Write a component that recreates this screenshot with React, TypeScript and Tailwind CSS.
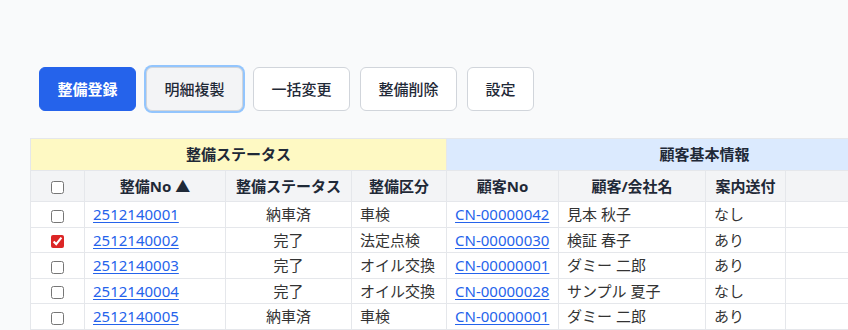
import React from "react";

type Row = {
  no: string;
  status: string;
  kind: string;
  customerNo: string;
  name: string;
  notice: string;
  checked?: boolean;
};

const rows: Row[] = [
  { no: "2512140001", status: "納車済", kind: "車検", customerNo: "CN-00000042", name: "見本 秋子", notice: "なし" },
  { no: "2512140002", status: "完了", kind: "法定点検", customerNo: "CN-00000030", name: "検証 春子", notice: "あり", checked: true },
  { no: "2512140003", status: "完了", kind: "オイル交換", customerNo: "CN-00000001", name: "ダミー 二郎", notice: "あり" },
  { no: "2512140004", status: "完了", kind: "オイル交換", customerNo: "CN-00000028", name: "サンプル 夏子", notice: "なし" },
  { no: "2512140005", status: "納車済", kind: "車検", customerNo: "CN-00000001", name: "ダミー 二郎", notice: "あり" },
];

const font = { fontFamily: '"Noto Sans", "Noto Sans CJK JP", sans-serif' };

function Btn({ label, variant = "default" }: { label: string; variant?: "primary" | "default" | "focused" }) {
  const base = "h-[44px] rounded-md border px-[17.5px] text-[15px] leading-none";
  if (variant === "primary")
    return <button className={`${base} border-[#2563eb] bg-[#2563eb] font-bold text-white`}>{label}</button>;
  if (variant === "focused")
    return (
      <button className={`${base} border-[#d1d5db] bg-[#f3f4f6] font-medium text-[#1f2937] ring-2 ring-[#93c5fd]`}>
        {label}
      </button>
    );
  return <button className={`${base} border-[#d1d5db] bg-white font-medium text-[#1f2937]`}>{label}</button>;
}

export default function App() {
  const th = "border border-[#e5e7eb] px-2 font-bold text-[#1f2937]";
  const td = "border border-[#e5e7eb] px-2 text-[#333333]";
  const link = "text-[#2563eb] underline underline-offset-2";

  return (
    <div className="h-screen overflow-hidden bg-[#f9fafb] pt-[67px]" style={font}>
      <div className="flex gap-[10px] pl-[39px]">
        <Btn label="整備登録" variant="primary" />
        <Btn label="明細複製" variant="focused" />
        <Btn label="一括変更" />
        <Btn label="整備削除" />
        <Btn label="設定" />
      </div>

      {/* 表は右へはみ出す — 顧客基本情報の続きは画面外 */}
      <div className="mt-[27px] overflow-hidden pl-[30px]">
        <table className="w-[932px] table-fixed border-collapse bg-white text-[15px]">
          <colgroup>
            <col className="w-[54px]" />
            <col className="w-[141px]" />
            <col className="w-[126px]" />
            <col className="w-[95px]" />
            <col className="w-[112px]" />
            <col className="w-[147px]" />
            <col className="w-[80px]" />
            <col className="w-[177px]" />
          </colgroup>
          <thead>
            <tr className="h-[32px]">
              <th colSpan={4} className={`${th} bg-[#fef9c3] text-center`}>
                整備ステータス
              </th>
              <th colSpan={4} className={`${th} bg-[#dbeafe] text-center`}>
                顧客基本情報
              </th>
            </tr>
            <tr className="h-[31px] bg-[#f3f4f6]">
              <th className={`${th} text-center`}>
                <input type="checkbox" className="align-middle" />
              </th>
              <th className={`${th} text-center`}>整備No ▲</th>
              <th className={`${th} text-center`}>整備ステータス</th>
              <th className={`${th} text-center`}>整備区分</th>
              <th className={`${th} text-center`}>顧客No</th>
              <th className={`${th} text-center`}>顧客/会社名</th>
              <th className={`${th} text-center`}>案内送付</th>
              <th className={th}></th>
            </tr>
          </thead>
          <tbody>
            {rows.map((r) => (
              <tr key={r.no} className="h-[25.6px]">
                <td className={`${td} text-center`}>
                  <input type="checkbox" defaultChecked={r.checked} className="align-middle accent-[#dc2626]" />
                </td>
                <td className={td}>
                  <a href="#" className={link}>
                    {r.no}
                  </a>
                </td>
                <td className={`${td} text-center`}>{r.status}</td>
                <td className={td}>{r.kind}</td>
                <td className={td}>
                  <a href="#" className={link}>
                    {r.customerNo}
                  </a>
                </td>
                <td className={td}>{r.name}</td>
                <td className={td}>{r.notice}</td>
                <td className={td}></td>
              </tr>
            ))}
          </tbody>
        </table>
      </div>
    </div>
  );
}
